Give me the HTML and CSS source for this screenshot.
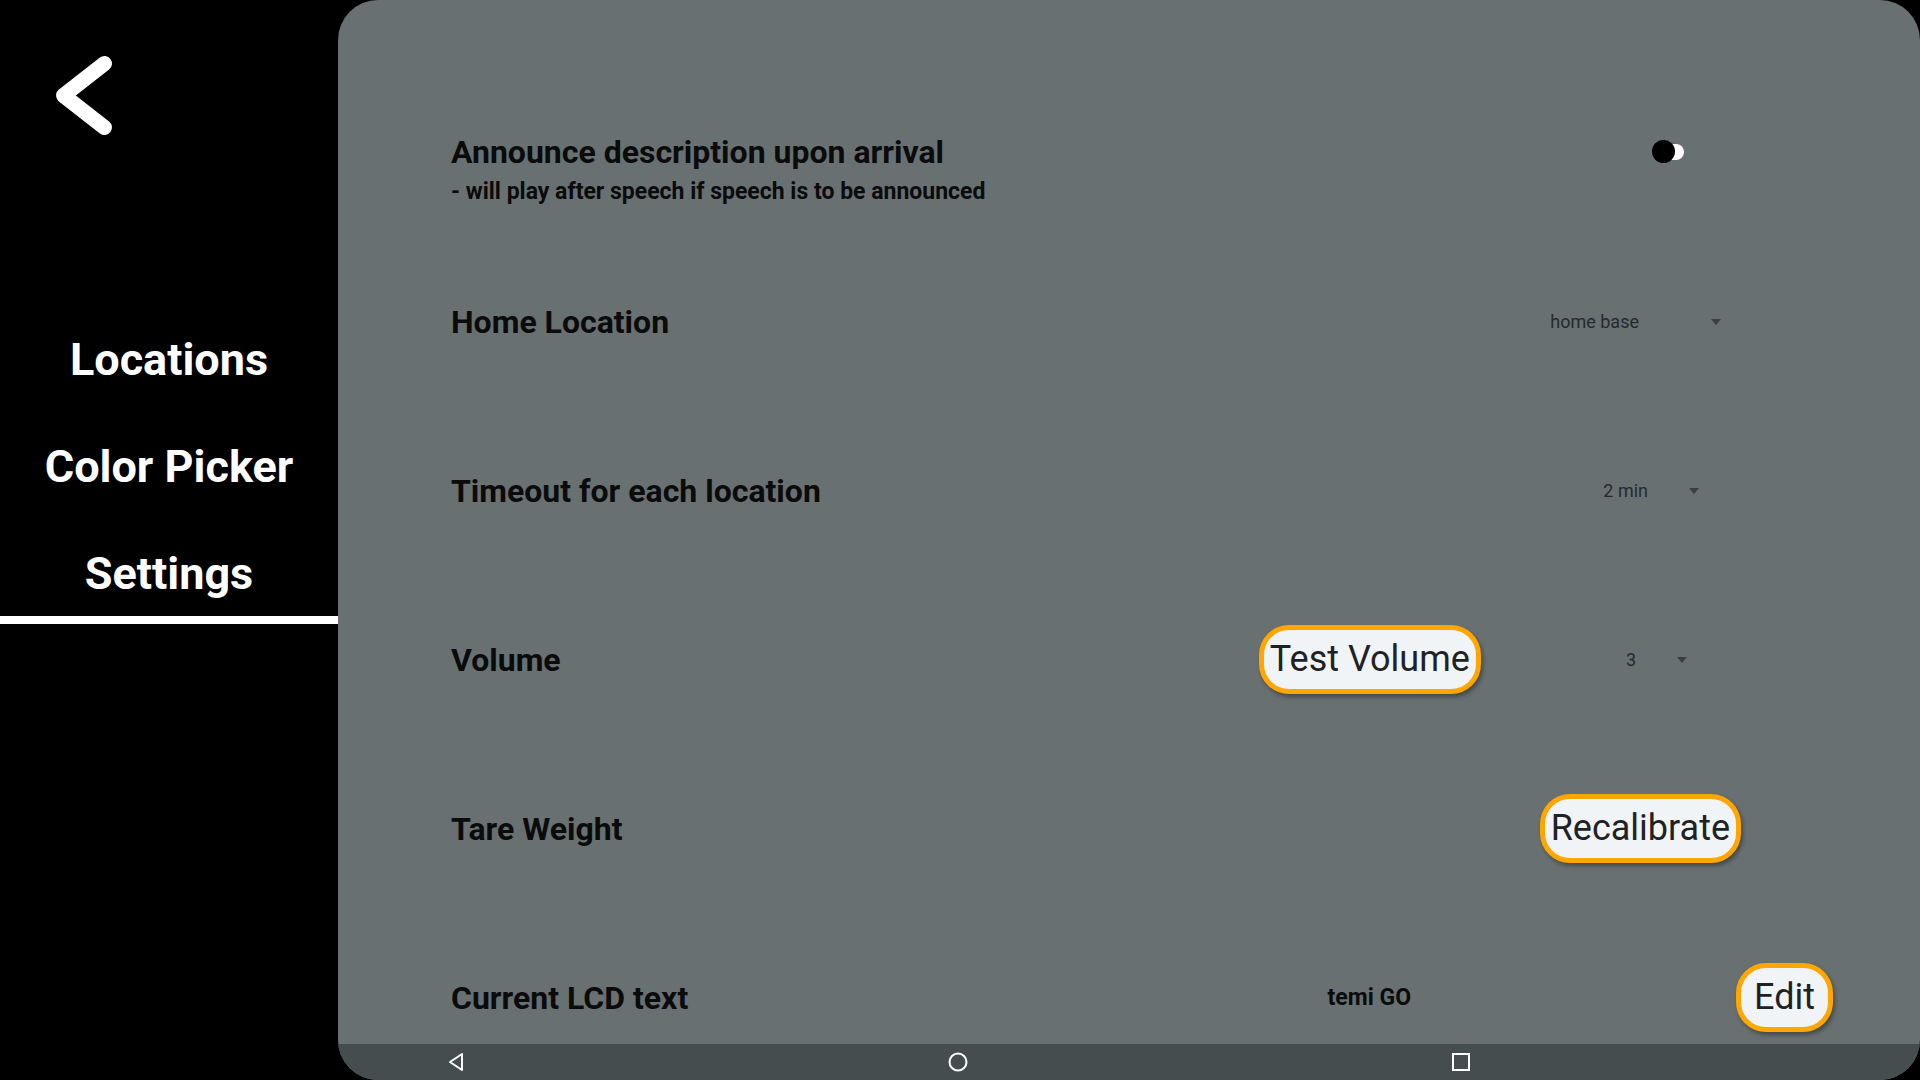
FILE: index.html
```html
<!DOCTYPE html>
<html lang="en">
<head>
<meta charset="utf-8">
<title>Settings</title>
<link rel="stylesheet" href="styles.css">
</head>
<body>
<aside class="sidebar">
  <svg class="back" width="80" height="100" viewBox="0 0 80 100" aria-label="Back">
    <path d="M64.5 18.5 L23.5 50.5 L64.5 82.5" fill="none" stroke="#fff" stroke-width="15" stroke-linecap="round" stroke-linejoin="round"/>
  </svg>
  <nav class="menu">
    <div class="menu-item">Locations</div>
    <div class="menu-item">Color Picker</div>
    <div class="menu-item menu-item--active">Settings</div>
  </nav>
</aside>
<main class="panel">
  <section class="content">
    <div class="row row--announce">
      <div class="label-block">
        <div class="label">Announce description upon arrival</div>
        <div class="sublabel">- will play after speech if speech is to be announced</div>
      </div>
      <div class="controls controls--toggle">
        <div class="toggle"><span class="track"></span><span class="thumb"></span></div>
      </div>
    </div>
    <div class="row">
      <div class="label">Home Location</div>
      <div class="controls controls--home">
        <div class="spinner spinner--home"><span class="spin-text">home base</span><span class="arrow"></span></div>
      </div>
    </div>
    <div class="row">
      <div class="label">Timeout for each location</div>
      <div class="controls controls--timeout">
        <div class="spinner spinner--timeout"><span class="spin-text">2 min</span><span class="arrow"></span></div>
      </div>
    </div>
    <div class="row">
      <div class="label">Volume</div>
      <div class="controls controls--volume">
        <button class="btn">Test Volume</button>
        <div class="spinner spinner--volume"><span class="spin-text">3</span><span class="arrow"></span></div>
      </div>
    </div>
    <div class="row">
      <div class="label">Tare Weight</div>
      <div class="controls controls--tare">
        <button class="btn">Recalibrate</button>
      </div>
    </div>
    <div class="row">
      <div class="label">Current LCD text</div>
      <div class="controls controls--lcd">
        <span class="lcd-value">temi GO</span>
        <button class="btn">Edit</button>
      </div>
    </div>
  </section>
  <footer class="navbar">
    <svg class="nav-icon" width="18" height="20" viewBox="0 0 18 20"><path d="M15 2 L3 10 L15 18 Z" fill="none" stroke="#fff" stroke-width="2" stroke-linejoin="round"/></svg>
    <svg class="nav-icon" width="20" height="20" viewBox="0 0 20 20"><circle cx="10" cy="10" r="8.5" fill="none" stroke="#fff" stroke-width="2"/></svg>
    <svg class="nav-icon" width="20" height="20" viewBox="0 0 20 20"><rect x="2" y="2" width="16" height="16" fill="none" stroke="#fff" stroke-width="2"/></svg>
  </footer>
</main>
</body>
</html>
```
FILE: styles.css
```css
* { box-sizing: border-box; }
html, body { margin: 0; padding: 0; }
body {
  width: 1920px;
  height: 1080px;
  background: #000;
  display: flex;
  font-family: Roboto, "Noto Sans", "Liberation Sans", sans-serif;
  overflow: hidden;
}
.sidebar {
  width: 338px;
  flex: none;
  display: flex;
  flex-direction: column;
}
.back {
  display: block;
  margin: 45px 0 0 40px;
}
.menu {
  margin-top: 179px;
  display: flex;
  flex-direction: column;
  gap: 35px;
}
.menu-item {
  color: #fff;
  font-weight: 700;
  font-size: 45px;
  line-height: 72px;
  text-align: center;
}
.menu-item--active {
  padding-bottom: 6px;
  border-bottom: 8px solid #fff;
}
.panel {
  flex: 1;
  background: #687072;
  border-radius: 40px;
  display: flex;
  flex-direction: column;
  overflow: hidden;
}
.content {
  flex: 1;
  min-height: 0;
  overflow: hidden;
  padding: 68px 0 0 113px;
}
.row {
  height: 169px;
  display: flex;
  align-items: center;
}
.row--announce {
  align-items: flex-start;
  padding-top: 66px;
}
.label-block { flex: 1; }
.row > .label { flex: 1; }
.label {
  font-size: 32px;
  font-weight: 700;
  line-height: 36px;
  color: #0b0b0b;
}
.sublabel {
  margin-top: 7px;
  font-size: 23px;
  font-weight: 700;
  line-height: 30px;
  color: #0b0b0b;
}
.controls {
  display: flex;
  align-items: center;
}
.controls--toggle { margin-right: 236px; height: 36px; }
.controls--home { margin-right: 199px; }
.controls--timeout { margin-right: 221px; }
.controls--volume { margin-right: 233px; gap: 145px; }
.controls--tare { margin-right: 179px; }
.controls--lcd { margin-right: 87px; gap: 325px; }

.toggle {
  position: relative;
  width: 32px;
  height: 24px;
}
.track {
  position: absolute;
  left: 4px;
  top: 4px;
  width: 28px;
  height: 16px;
  border-radius: 8px;
  background: #fff;
}
.thumb {
  position: absolute;
  left: 0;
  top: 0;
  width: 23px;
  height: 23px;
  border-radius: 50%;
  background: #000;
}
.spinner {
  display: flex;
  align-items: center;
}
.spin-text {
  font-size: 18px;
  color: #262a2b;
  line-height: 24px;
}
.arrow {
  width: 0;
  height: 0;
  border-left: 5.5px solid transparent;
  border-right: 5.5px solid transparent;
  border-top: 6px solid #3b3f40;
}
.spinner--home .arrow { margin-left: 72px; }
.spinner--timeout .arrow { margin-left: 41px; }
.spinner--volume .arrow { margin-left: 41px; }

.btn {
  font-family: Roboto, "Noto Sans", "Liberation Sans", sans-serif;
  font-size: 36px;
  color: #1f2224;
  background: #f1f4f7;
  border: 5px solid #ffa600;
  border-radius: 30px;
  height: 69px;
  min-width: 97px;
  padding: 0 6px;
  line-height: 59px;
  text-align: center;
  box-shadow: 2px 3px 4px rgba(0, 0, 0, 0.35);
}
.lcd-value {
  font-size: 23px;
  font-weight: 700;
  color: #0b0b0b;
}
.navbar {
  height: 36px;
  flex: none;
  background: #464d4f;
  display: flex;
  align-items: center;
  padding-left: 109px;
  gap: 483px;
}
.nav-icon { display: block; }
```
